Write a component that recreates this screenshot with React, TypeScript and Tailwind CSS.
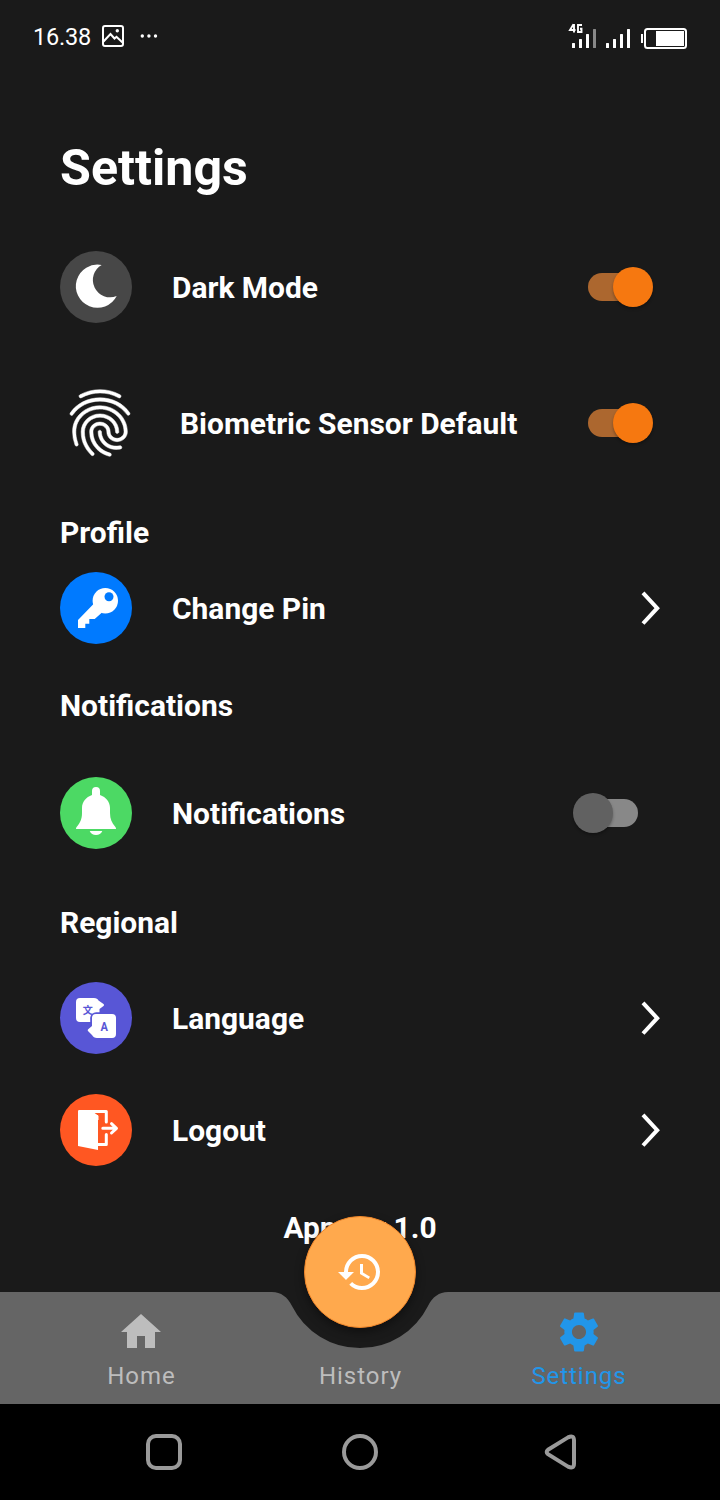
import type { ReactNode } from "react";
import { MdFingerprint, MdHistory } from "react-icons/md";

function StatusBar() {
  return (
    <header className="flex h-[72px] items-center justify-between pr-[33px] pl-[33px]">
      <div className="flex items-center">
        <span className="w-[69px] pt-[2px] text-[23.5px] leading-[28px] font-normal tracking-[-0.2px]">16.38</span>
        <svg className="h-[22px] w-[22px]" viewBox="0 0 22 22" fill="none" stroke="#fff" strokeWidth="2">
          <rect x="1" y="1" width="20" height="20" rx="2" />
          <path d="M1.500 16.500 8.500 9l4 4.500 2-1.700 6 5.700" />
          <circle cx="15.300" cy="5.800" r="1.700" fill="#fff" stroke="none" />
        </svg>
        <svg className="ml-4 h-[4px] w-[18px]" viewBox="0 0 18 4" fill="#fff">
          <circle cx="2.300" cy="2" r="1.700" />
          <circle cx="8.900" cy="2" r="1.700" />
          <circle cx="15.500" cy="2" r="1.700" />
        </svg>
      </div>
      <svg className="h-[28px] w-[119px]" viewBox="568 22 119 28" fill="#fff">
        <path d="M573.500 24.300 570 30H575.500M574 24v8.500" fill="none" stroke="#fff" strokeWidth="1.900" />
        <path d="M582 25h-4v7h3.500v-3.300h-1.500" fill="none" stroke="#fff" strokeWidth="1.900" />
        <rect x="572" y="43" width="3" height="5" rx="0.500" />
        <rect x="579" y="39" width="3" height="9" rx="0.500" />
        <rect x="586" y="34" width="3" height="14" rx="0.500" />
        <rect x="593" y="29" width="3" height="19" rx="0.500" fill="#888" />
        <rect x="606" y="43" width="3" height="5" rx="0.500" />
        <rect x="613" y="39" width="3" height="9" rx="0.500" />
        <rect x="620" y="34" width="3" height="14" rx="0.500" />
        <rect x="627" y="29" width="3" height="19" rx="0.500" />
        <rect x="641" y="34" width="2" height="9" />
        <rect x="645" y="29" width="41" height="19" rx="2.500" fill="none" stroke="#fff" strokeWidth="2" />
        <rect x="656" y="31" width="28" height="15" />
      </svg>
    </header>
  );
}

function MoonIcon() {
  return <path d="M41.700 14A17.250 17.250 0 0 0 56.700 45A21.600 21.600 0 1 1 41.700 14Z" />;
}

function KeyIcon() {
  return (
    <>
      <path d="M34 31.500 18 48v8h7.300v-4.300h4V47h5.400l7.300-6.500Z" />
      <circle cx="45.300" cy="28.700" r="12.700" />
      <circle cx="49" cy="24.700" r="4.500" fill="#007aff" />
    </>
  );
}

function BellIcon() {
  return (
    <>
      <path d="M32 18v-4a4 4 0 0 1 8 0v4c6 2 10 7 10 13v5c0 6 2 10 5 13.500 1 1.200 1 1.900 1 2.500H16c0-.6 0-1.300 1-2.500C20 46 22 42 22 36v-5c0-6 4-11 10-13Z" />
      <path d="M29.700 54h12.600c-1 2.600-3.400 4-6.300 4s-5.300-1.400-6.300-4Z" />
    </>
  );
}

function LanguageIcon() {
  return (
    <>
      <path d="M20 16h14q3.500 0 4.500 2.500L43.500 22q1 1 0 2L39.500 27V40H20q-4 0-4-4V20q0-4 4-4Z" />
      <rect x="30.200" y="30.200" width="28" height="28" rx="6" fill="#5856d6" />
      <path d="M36 32h16q4 0 4 4v16q0 4-4 4H37q-3.500 0-5-3L28.200 49.300q-1-1 0-2L32 44V36q0-4 4-4Z" />
      <text x="27.700" y="31.800" textAnchor="middle" fill="#5856d6" className="font-['Noto_Sans_CJK_SC',sans-serif] text-[10px] font-bold">文</text>
      <text transform="translate(44.200 49.200) scale(.82 1)" textAnchor="middle" fill="#5856d6" className="font-['Roboto',sans-serif] text-[13.5px] font-bold">A</text>
    </>
  );
}

function LogoutIcon() {
  return (
    <>
      <path d="M19.500 16h11.500l7 5.700V56L18 52V17.500q0-1.500 1.500-1.500Z" />
      <path d="M19.500 17.500h26.800V28M46.300 40.500v10H36" fill="none" stroke="#fff" strokeWidth="3" strokeLinecap="round" strokeLinejoin="round" />
      <path d="M31 19.500 38 21.700V26" fill="none" stroke="#fff" strokeWidth="1" />
      <path d="M42.800 34.300h13.500M51.500 29.700l5 4.600-5 4.700" fill="none" stroke="#fff" strokeWidth="3" strokeLinecap="round" strokeLinejoin="round" />
    </>
  );
}

function Badge({ color, children }: { color: string; children: ReactNode }) {
  return (
    <span className={`mr-10 h-[72px] w-[72px] shrink-0 rounded-full ${color}`}>
      <svg viewBox="0 0 72 72" className="h-[72px] w-[72px]" fill="#fff">
        {children}
      </svg>
    </span>
  );
}

function Toggle({ on }: { on: boolean }) {
  return on ? (
    <span className="mr-[7px] flex h-10 w-[65px] items-center">
      <span className="h-7 w-[62px] shrink-0 rounded-full bg-[#ac672f]" />
      <span className="-ml-[37px] h-10 w-10 shrink-0 rounded-full bg-[#f67810] shadow-[0_2px_3px_rgba(0,0,0,0.3)]" />
    </span>
  ) : (
    <span className="mr-[22px] flex h-10 w-[65px] items-center">
      <span className="relative z-10 h-10 w-10 shrink-0 rounded-full bg-[#616161] shadow-[0_2px_3px_rgba(0,0,0,0.3)]" />
      <span className="-ml-[37px] h-7 w-[62px] shrink-0 rounded-full bg-[#888888]" />
    </span>
  );
}

function Chevron() {
  return (
    <svg className="h-[36px] w-[20px]" viewBox="0 0 20 36" fill="none" stroke="#fff" strokeWidth="4">
      <path d="M3 2.800 17.200 18.200 3 33.500" />
    </svg>
  );
}

function Row({ className, icon, label, children }: { className: string; icon: ReactNode; label: string; children: ReactNode }) {
  return (
    <div className={`flex items-center ${className}`}>
      {icon}
      <span className="flex-1 pt-[2px] text-[29.95px] leading-[40px] whitespace-nowrap">{label}</span>
      {children}
    </div>
  );
}

function Heading({ className, children }: { className: string; children: ReactNode }) {
  return <h2 className={`h-10 pt-px text-[29.95px] leading-[40px] ${className}`}>{children}</h2>;
}

function TabBar() {
  return (
    <nav className="relative h-[112px] shrink-0 text-[24px] leading-[28px] font-normal tracking-[0.95px] text-[#bdbdbd]">
      <svg className="absolute inset-0 h-[112px] w-[720px]" viewBox="0 0 720 112" fill="#656565">
        <path d="M0 0H272C281 0 287.500 5 292 14A76 76 0 0 0 428 14C432.500 5 439 0 448 0H720V112H0Z" />
      </svg>
      <div className="absolute -top-[76px] left-[304px] flex h-[112px] w-[112px] items-center justify-center rounded-full border border-[#f0862a] bg-[#ffa94d] shadow-[0_4px_10px_rgba(0,0,0,0.4)]">
        <MdHistory size={48} color="#fff" />
      </div>
      <div className="relative grid h-full grid-cols-[282px_156px_282px] text-center">
        <div className="flex flex-col items-center pt-4">
          <svg className="h-12 w-12" viewBox="0 0 24 24" fill="#bdbdbd">
            <path d="M10 20v-6h4v6h5v-8h3L12 3 2 12h3v8z" />
          </svg>
          <span className="mt-1.5 pl-px">Home</span>
        </div>
        <div className="flex flex-col items-center pt-[70px]">
          <span className="pl-px">History</span>
        </div>
        <div className="flex flex-col items-center pt-4 text-[#2196ea]">
          <svg className="h-12 w-12" viewBox="-0.300 -0.300 24.600 24.600" fill="#2196ea">
            <path d="M19.430 12.980c.04-.32.07-.64.07-.98s-.03-.66-.07-.98l2.110-1.650c.19-.15.24-.42.12-.64l-2-3.460c-.12-.22-.39-.3-.61-.22l-2.490 1c-.52-.4-1.080-.73-1.690-.98l-.38-2.650C14.460 2.180 14.250 2 14 2h-4c-.25 0-.46.18-.49.42l-.38 2.650c-.61.25-1.170.59-1.690.98l-2.490-1c-.23-.09-.49 0-.61.22l-2 3.460c-.13.22-.07.49.12.64l2.110 1.650c-.04.32-.07.65-.07.98s.03.66.07.98l-2.110 1.650c-.19.15-.24.42-.12.64l2 3.460c.12.22.39.3.61.22l2.490-1c.52.4 1.080.73 1.690.98l.38 2.650c.03.24.24.42.49.42h4c.25 0 .46-.18.49-.42l.38-2.650c.61-.25 1.170-.59 1.690-.98l2.490 1c.23.09.49 0 .61-.22l2-3.460c.12-.22.07-.49-.12-.64l-2.110-1.650zM12 15.600c-1.990 0-3.600-1.610-3.600-3.600s1.610-3.600 3.600-3.600 3.600 1.610 3.600 3.600-1.610 3.600-3.600 3.600z" />
          </svg>
          <span className="mt-1.5">Settings</span>
        </div>
      </div>
    </nav>
  );
}

function SystemNav() {
  return (
    <footer className="flex h-24 shrink-0 items-center bg-black pl-[146px]">
      <svg className="h-9 w-9" viewBox="0 0 36 36" fill="none" stroke="#9a9a9a" strokeWidth="4">
        <rect x="2" y="2" width="32" height="32" rx="8" />
      </svg>
      <svg className="ml-40 h-9 w-9" viewBox="0 0 36 36" fill="none" stroke="#9a9a9a" strokeWidth="4">
        <circle cx="18" cy="18" r="16" />
      </svg>
      <svg className="ml-[164px] h-9 w-9" viewBox="0 0 36 36" fill="none" stroke="#9a9a9a" strokeWidth="4">
        <path d="M6 15.800 26 3.400Q32 .5 32 6.500V29.500Q32 35.500 26 32.600L6 20.200Q3.400 18 6 15.800Z" />
      </svg>
    </footer>
  );
}

export default function App() {
  return (
    <div className="flex h-[1500px] w-[720px] flex-col overflow-hidden bg-[#1a1a1a] font-['Roboto',sans-serif] font-bold text-white">
      <StatusBar />
      <main className="flex-1 px-[60px]">
        <h1 className="mt-[66px] h-[60px] text-[50.2px] leading-[60px]">Settings</h1>
        <Row className="mt-[53px] h-[72px]" icon={<Badge color="bg-[#474747]"><MoonIcon /></Badge>} label="Dark Mode">
          <Toggle on />
        </Row>
        <Row className="mt-[60px] h-[80px]" icon={<MdFingerprint size={80} className="mr-10 shrink-0 [&>path:last-child]:stroke-[0.15]" />} label="Biometric Sensor Default">
          <Toggle on />
        </Row>
        <Heading className="mt-[49px]">Profile</Heading>
        <Row className="mt-5 h-[72px]" icon={<Badge color="bg-[#007aff]"><KeyIcon /></Badge>} label="Change Pin">
          <Chevron />
        </Row>
        <Heading className="mt-[41px]">Notifications</Heading>
        <Row className="mt-[52px] h-[72px]" icon={<Badge color="bg-[#4cd964]"><BellIcon /></Badge>} label="Notifications">
          <Toggle on={false} />
        </Row>
        <Heading className="mt-[53px]">Regional</Heading>
        <Row className="mt-10 h-[72px]" icon={<Badge color="bg-[#5856d6]"><LanguageIcon /></Badge>} label="Language">
          <Chevron />
        </Row>
        <Row className="mt-10 h-[72px]" icon={<Badge color="bg-[#ff5722]"><LogoutIcon /></Badge>} label="Logout">
          <Chevron />
        </Row>
        <p className="mt-[41px] h-10 pt-px text-center text-[29.9px] leading-[40px]">App ver 1.0</p>
      </main>
      <TabBar />
      <SystemNav />
    </div>
  );
}
